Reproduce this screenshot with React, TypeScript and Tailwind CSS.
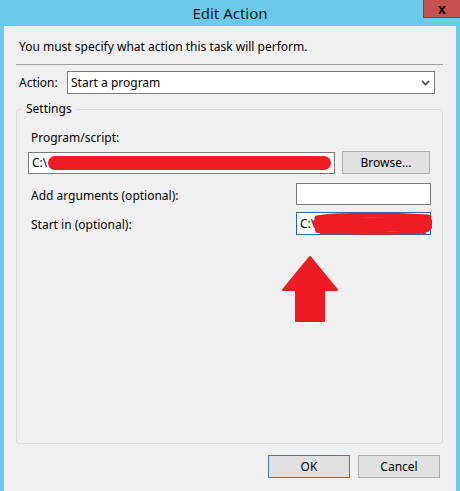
import React from "react";

const font = { fontFamily: '"Noto Sans", "Open Sans", sans-serif' };

function TextBox({ children, focused }: { children?: React.ReactNode; focused?: boolean }) {
  return (
    <div
      className={`relative flex h-[22px] w-[135px] items-center border bg-white pl-[3px] text-[12px] text-black ${
        focused ? "h-[23px] border-[#2a6a9e]" : "border-[#7a7a7a]"
      }`}
    >
      {children}
    </div>
  );
}

function Button({ label, primary, className = "" }: { label: string; primary?: boolean; className?: string }) {
  return (
    <button
      className={`flex h-[23px] items-center justify-center border bg-[#e1e1e1] text-[12px] text-black ${
        primary ? "border-[#3c7fb1]" : "border-[#adadad]"
      } ${className}`}
    >
      {label}
    </button>
  );
}

function Scribble() {
  return (
    <svg className="absolute left-[16px] top-[0px]" width="119" height="22" viewBox="0 0 119 22">
      <g stroke="#ee1c25" strokeLinecap="round" strokeLinejoin="round" fill="none">
        <path d="M4 5 C20 2 40 3 60 2 C80 2 100 3 116 4" strokeWidth="5" />
        <path d="M3 9 C25 7 50 8 75 7 C95 7 108 8 117 9" strokeWidth="6" />
        <path d="M4 13 C25 11 50 12 75 12 C95 11 108 12 117 13" strokeWidth="6" />
        <path d="M5 17 C25 15 45 18 70 16 C90 15 105 17 114 16" strokeWidth="6" />
        <path d="M8 20 C30 19 55 21 80 20 C95 19 104 20 110 19" strokeWidth="3" />
      </g>
      <g fill="#ee1c25">
        <circle cx="111" cy="20" r="2" />
        <circle cx="96" cy="21" r="1.5" />
      </g>
    </svg>
  );
}

export default function App() {
  return (
    <div className="flex h-[491px] w-[460px] flex-col overflow-hidden bg-[#6bc9e9]" style={font}>
      <div className="relative flex h-[26px] shrink-0 items-center justify-center">
        <span className="text-[15px] text-[#1a1a1a]">Edit Action</span>
        <div className="absolute right-0 top-0 flex h-[18px] w-[37px] items-center justify-center border-b border-l border-[#8a3b3b] bg-[#c75050]">
          <span className="text-[14px] font-bold leading-none text-black" style={{ fontFamily: '"Liberation Sans", sans-serif' }}>
            x
          </span>
        </div>
      </div>

      <div className="mx-[4px] flex flex-1 flex-col bg-[#f0f0f0] text-[12px] text-black">
        <p className="ml-[15px] mt-[13px] h-[16px] leading-[16px]">You must specify what action this task will perform.</p>
        <div className="ml-[12px] mr-[13px] mt-[9px] border-t border-[#a0a0a0]" />

        <div className="ml-[15px] mr-[21px] mt-[6px] flex items-center">
          <span className="w-[48px]">Action:</span>
          <div className="flex h-[23px] flex-1 items-center justify-between border border-[#7a7a7a] bg-white pl-[3px] pr-[4px]">
            <span>Start a program</span>
            <svg width="9" height="6" viewBox="0 0 9 6">
              <path d="M1 1 L4.5 4.5 L8 1" stroke="#404040" strokeWidth="1.6" fill="none" />
            </svg>
          </div>
        </div>

        <div className="relative ml-[12px] mr-[13px] mt-[15px] flex h-[335px] flex-col rounded-[3px] border border-[#dcdcdc] px-[11px]">
          <span className="absolute -top-[9px] left-[5px] bg-[#f0f0f0] px-[4px] leading-[16px]">Settings</span>

          <p className="ml-[3px] mt-[20px] h-[16px] leading-[16px]">Program/script:</p>
          <div className="mt-[5px] flex items-center">
            <div className="flex h-[22px] w-[307px] items-center border border-[#7a7a7a] bg-white pl-[3px] pr-[3px]">
              <span>C:\</span>
              <div className="ml-[1px] h-[14px] flex-1 rounded-full bg-[#ee1c25]" />
            </div>
            <Button label="Browse..." className="ml-[7px] h-[22px] w-[88px]" />
          </div>

          <div className="mt-[9px] flex items-center justify-between">
            <span className="ml-[3px] mt-[3px]">Add arguments (optional):</span>
            <TextBox />
          </div>

          <div className="mt-[7px] flex items-center justify-between">
            <span className="ml-[3px] mt-[3px]">Start in (optional):</span>
            <TextBox focused>
              <span>C:\</span>
              <Scribble />
            </TextBox>
          </div>

          <svg className="ml-[254px] mt-[21px]" width="56" height="67" viewBox="0 0 56 67">
            <path
              d="M28 1 L55 34 L42 34 L42 65 L14 65 L14 34 L1 34 Z"
              fill="#ed1c24"
              stroke="#ed1c24"
              strokeWidth="2"
              strokeLinejoin="round"
            />
          </svg>
        </div>

        <div className="mr-[16px] mt-[11px] flex justify-end gap-[8px]">
          <Button label="OK" primary className="w-[82px]" />
          <Button label="Cancel" className="w-[82px]" />
        </div>
      </div>
    </div>
  );
}
